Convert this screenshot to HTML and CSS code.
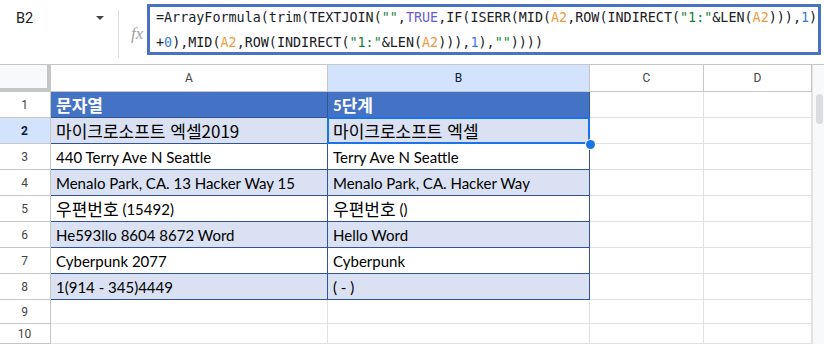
FILE: index.html
```html
<!DOCTYPE html>
<html lang="ko">
<head>
	<meta charset="UTF-8">
	<title>ArrayFormula</title>
	<link rel="stylesheet" href="styles.css">
</head>
<body>
	<header class="bar">
		<div class="namebox"><span>B2</span><i class="caret"></i></div>
		<div class="sep"></div>
		<div class="fx">fx</div>
		<div class="formula">
			<div>=ArrayFormula(trim(TEXTJOIN(<b class="s">""</b>,<b class="k">TRUE</b>,IF(ISERR(MID(<b class="r">A2</b>,ROW(INDIRECT(<b class="s">"1:"</b>&amp;LEN(<b class="r">A2</b>))),<b class="n">1</b>)</div>
			<div>+<b class="n">0</b>),MID(<b class="r">A2</b>,ROW(INDIRECT(<b class="s">"1:"</b>&amp;LEN(<b class="r">A2</b>))),<b class="n">1</b>),<b class="s">""</b>))))</div>
		</div>
	</header>

	<section class="sheet">
		<div class="scroll"><i class="thumb"></i></div>

		<div class="corner"></div>
		<div class="ch">A</div>
		<div class="ch on">B</div>
		<div class="ch">C</div>
		<div class="ch">D</div>

		<div class="rh">1</div>
		<div class="c t head"><span class="ko">문자열</span></div>
		<div class="c t head">5<span class="ko">단계</span></div>
		<div class="c"></div><div class="c"></div>

		<div class="rh on">2</div>
		<div class="c t band"><span class="ko">마이크로소프트 엑셀2019</span></div>
		<div class="c t band sel"><span class="ko">마이크로소프트 엑셀</span></div>
		<div class="c"></div><div class="c"></div>

		<div class="rh">3</div>
		<div class="c t">440 Terry Ave N Seattle</div>
		<div class="c t">Terry Ave N Seattle</div>
		<div class="c"></div><div class="c"></div>

		<div class="rh">4</div>
		<div class="c t band">Menalo Park, CA. 13 Hacker Way 15</div>
		<div class="c t band">Menalo Park, CA. Hacker Way</div>
		<div class="c"></div><div class="c"></div>

		<div class="rh">5</div>
		<div class="c t"><span class="ko">우편번호</span>&nbsp;(15492)</div>
		<div class="c t"><span class="ko">우편번호</span>&nbsp;()</div>
		<div class="c"></div><div class="c"></div>

		<div class="rh">6</div>
		<div class="c t band">He593llo 8604 8672 Word</div>
		<div class="c t band">Hello Word</div>
		<div class="c"></div><div class="c"></div>

		<div class="rh">7</div>
		<div class="c t">Cyberpunk 2077</div>
		<div class="c t">Cyberpunk</div>
		<div class="c"></div><div class="c"></div>

		<div class="rh">8</div>
		<div class="c t band">1(914 - 345)4449</div>
		<div class="c t band">( - )</div>
		<div class="c"></div><div class="c"></div>

		<div class="rh">9</div>
		<div class="c"></div><div class="c"></div><div class="c"></div><div class="c"></div>

		<div class="rh">10</div>
		<div class="c"></div><div class="c"></div><div class="c"></div><div class="c"></div>
	</section>
</body>
</html>
```

FILE: styles.css
```css
html, body {
	margin: 0;
	height: 100%;
	overflow: hidden;
	background: #fff;
}

body {
	width: 824px;
	font: 14px Roboto, "Noto Sans CJK KR", sans-serif;
	color: #202124;
}

/* formula bar */
.bar {
	display: flex;
	align-items: flex-start;
	height: 64px;
	border-bottom: 1px solid #c4c7c5;
}

.namebox {
	display: flex;
	align-items: center;
	justify-content: space-between;
	width: 118px;
	height: 36px;
	padding: 0 14px 0 16px;
	box-sizing: border-box;
	font-size: 14.5px;
}

.caret {
	width: 0;
	height: 0;
	border-left: 4px solid transparent;
	border-right: 4px solid transparent;
	border-top: 4px solid #444;
}

.sep {
	width: 1px;
	height: 48px;
	margin-top: 10px;
	background: #dadce0;
}

.fx {
	width: 28px;
	margin-top: 24px;
	padding-left: 12px;
	box-sizing: border-box;
	font: italic 17px "Liberation Serif", serif;
	color: #a0a4a8;
}

.formula {
	width: 674px;
	height: 51px;
	margin-top: 4px;
	padding: 0 0 0 6px;
	border: 3px solid #4a72c2;
	box-sizing: border-box;
	overflow: hidden;
	white-space: nowrap;
	font: 13.4px/22px "DejaVu Sans Mono", monospace;
	color: #202124;
}

.formula div + div {
	margin-top: 3px;
}

.formula b {
	font-weight: normal;
}
.formula .s {
	color: #188038;
}
.formula .k {
	color: #6a5bd0;
}
.formula .r {
	color: #f09a3e;
}
.formula .n {
	color: #3a7be0;
}

/* grid */
.sheet {
	display: grid;
	grid-template-columns: 51px 277px 262px 114px 108px 12px;
	grid-template-rows: 27px repeat(8, 26px) 24px 1fr;
	height: 279px;
}

.sheet > div {
	box-sizing: border-box;
	min-width: 0;
}

.scroll {
	grid-column: 6;
	grid-row: 1 / span 11;
	padding: 29px 0 0 3px;
	background: #f8f9fa;
	border-left: 1px solid #e1e3e1;
}

.thumb {
	display: block;
	width: 7px;
	height: 30px;
	border-radius: 4px;
	background: #dadce0;
}

.corner {
	background: #f8f9fa;
	border-right: 4px solid #c4c7c5;
	border-bottom: 4px solid #c4c7c5;
}

.ch {
	display: flex;
	align-items: center;
	justify-content: center;
	font-size: 12px;
	color: #444;
	border-right: 1px solid #c4c7c5;
	border-bottom: 1px solid #c4c7c5;
}

.rh {
	display: flex;
	align-items: center;
	justify-content: center;
	padding-right: 1px;
	font-size: 12px;
	color: #444;
	border-right: 1px solid #c4c7c5;
	border-bottom: 1px solid #c4c7c5;
}

.on {
	background: #d3e3fd;
	color: #0b1a3a;
}
.rh.on {
	font-weight: bold;
}

.c {
	display: flex;
	align-items: center;
	padding: 0 5px;
	overflow: hidden;
	white-space: nowrap;
	font: 15px Lato, "Noto Sans CJK KR", sans-serif;
	color: #000;
	border-right: 1px solid #e1e1e1;
	border-bottom: 1px solid #e1e1e1;
}

.ko {
	font: inherit;
	font-family: "Noto Sans CJK KR", sans-serif;
	font-size: 17px;
	line-height: 20px;
}

.t {
	border-color: #2f5597;
}

.band {
	background: #d9e1f2;
}

.head {
	background: #4472c4;
	color: #fff;
	font-weight: bold;
}

.sel {
	position: relative;
	overflow: visible;
}
.sel:after {
	content: '';
	position: absolute;
	top: -1px;
	left: -1px;
	right: -1px;
	bottom: -1px;
	border: 2px solid #1a73e8;
}
.sel:before {
	content: '';
	position: absolute;
	right: -6px;
	bottom: -6px;
	z-index: 1;
	width: 9px;
	height: 9px;
	border-radius: 50%;
	background: #1a73e8;
	box-shadow: 0 0 0 1px #fff;
}
```
